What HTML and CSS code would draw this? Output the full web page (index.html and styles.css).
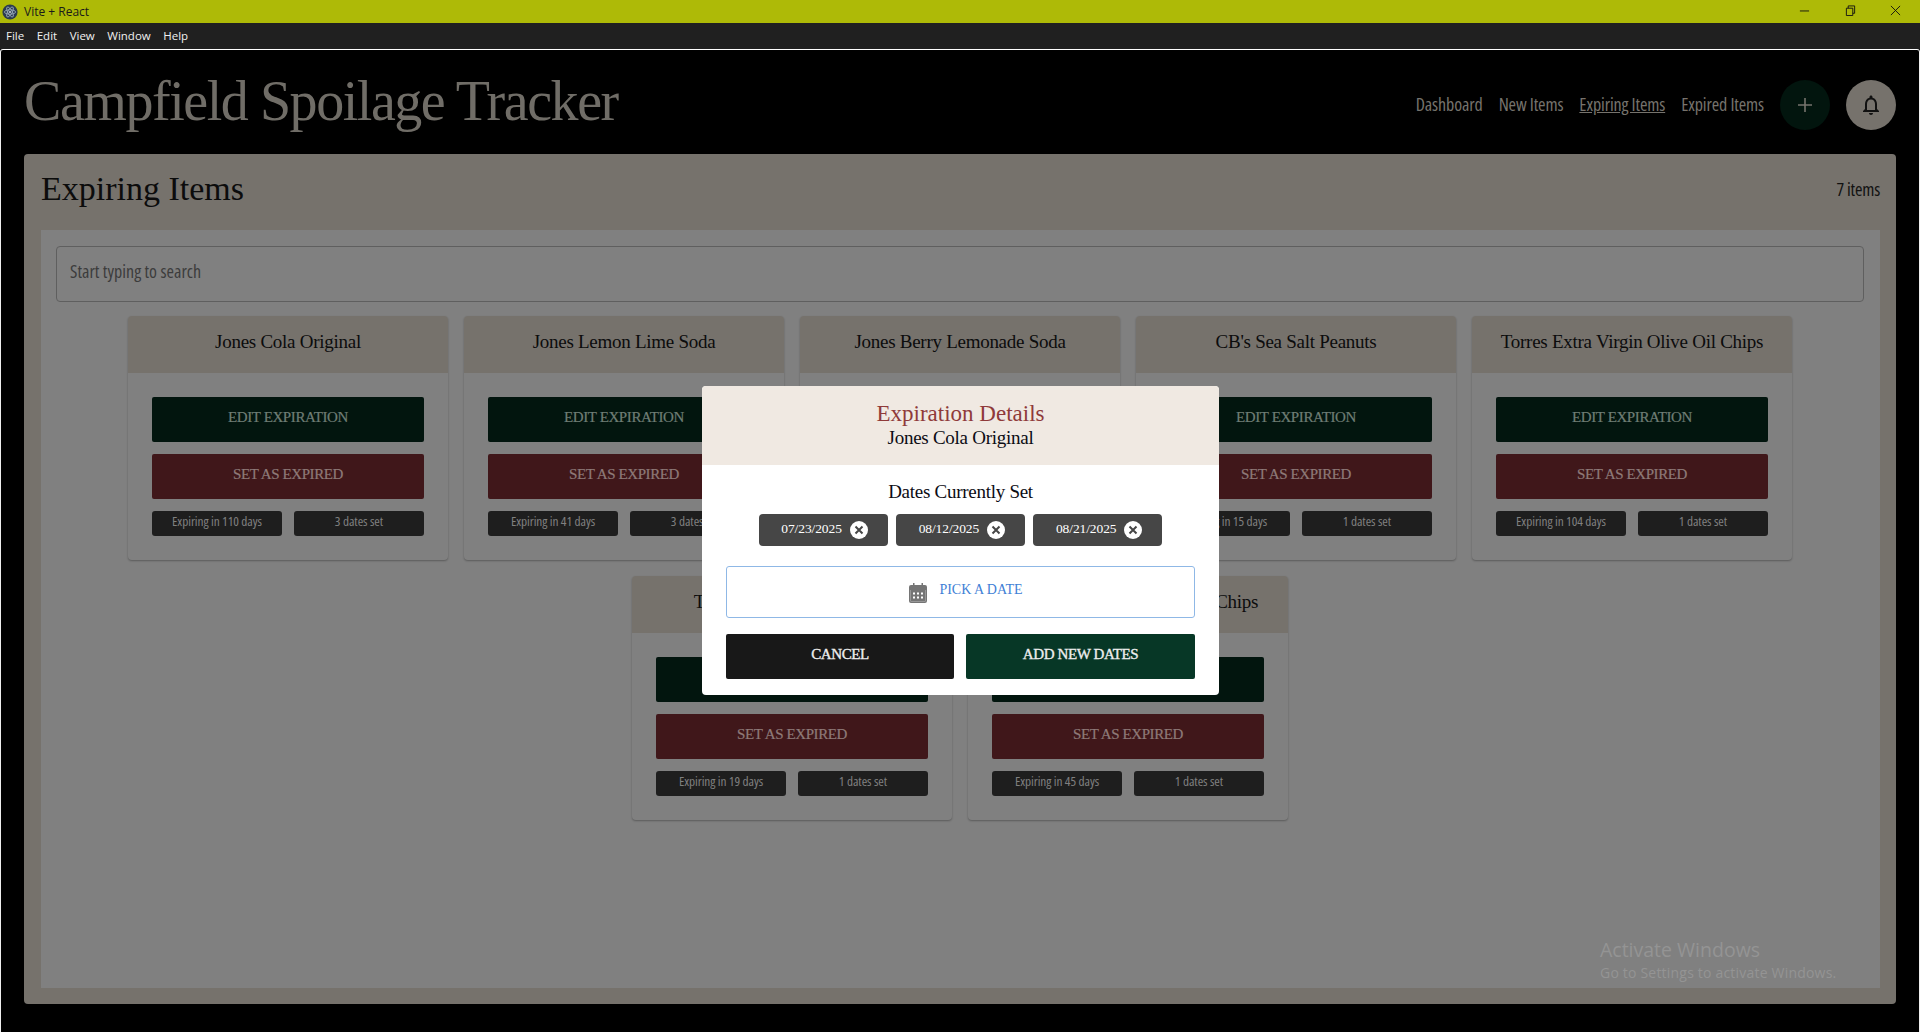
FILE: index.html
```html
<!DOCTYPE html>
<html lang="en">
<head>
<meta charset="utf-8">
<title>Vite + React</title>
<link rel="stylesheet" href="styles.css">
</head>
<body>
<div class="window">
  <div class="titlebar">
    <div class="titlebar-left">
      <svg class="app-icon" viewBox="0 0 16 16"><circle cx="8" cy="8" r="7.6" fill="#2b3a4f"/><g fill="none" stroke="#9fb0c0" stroke-width=".8"><ellipse cx="8" cy="8" rx="5.6" ry="2.2"/><ellipse cx="8" cy="8" rx="5.6" ry="2.2" transform="rotate(60 8 8)"/><ellipse cx="8" cy="8" rx="5.6" ry="2.2" transform="rotate(120 8 8)"/></g><circle cx="8" cy="8" r="1" fill="#cfd8e0"/></svg>
      <span>Vite + React</span>
    </div>
    <div class="window-controls">
      <svg class="win-icon" viewBox="0 0 12 12"><path d="M1 6.500h10" stroke="#111" stroke-width="1"/></svg>
      <svg class="win-icon" viewBox="0 0 12 12"><path d="M1.500 3.500h7v8h-7zM3.500 3.500v-2.500h7v8h-2" fill="none" stroke="#111" stroke-width="1"/></svg>
      <svg class="win-icon" viewBox="0 0 12 12"><path d="M1 1l10 10M11 1L1 11" stroke="#111" stroke-width="1"/></svg>
    </div>
  </div>
  <div class="menubar">
    <span>File</span><span>Edit</span><span>View</span><span>Window</span><span>Help</span>
  </div>
  <div class="app">
    <header class="app-header">
      <h1 class="app-title">Campfield Spoilage Tracker</h1>
      <nav class="nav">
        <a>Dashboard</a><a>New Items</a><a class="active">Expiring Items</a><a>Expired Items</a>
        <button class="round round-add"><svg viewBox="0 0 24 24"><path d="M12 5v14M5 12h14" stroke="currentColor" stroke-width="1.6" fill="none"/></svg></button>
        <button class="round round-bell"><svg viewBox="0 0 24 24"><path d="M12 22c1.100 0 2-.9 2-2h-4c0 1.100.9 2 2 2zm6-6v-5c0-3.070-1.630-5.640-4.500-6.320V4c0-.83-.67-1.500-1.500-1.500s-1.500.67-1.500 1.500v.68C7.640 5.360 6 7.920 6 11v5l-2 2v1h16v-1l-2-2zm-2 1H8v-6c0-2.480 1.510-4.500 4-4.500s4 2.020 4 4.500v6z" fill="currentColor"/></svg></button>
      </nav>
    </header>
    <main class="panel">
      <div class="panel-head">
        <h2 class="panel-title">Expiring Items</h2>
        <span class="panel-count">7 items</span>
      </div>
      <div class="panel-body">
        <div class="search">Start typing to search</div>
        <div class="cards">
          <article class="card"><h3 class="card-name">Jones Cola Original</h3><div class="card-body"><button class="btn btn-green">EDIT EXPIRATION</button><button class="btn btn-red">SET AS EXPIRED</button><div class="chips"><span class="chip">Expiring in 110 days</span><span class="chip">3 dates set</span></div></div></article>
          <article class="card"><h3 class="card-name">Jones Lemon Lime Soda</h3><div class="card-body"><button class="btn btn-green">EDIT EXPIRATION</button><button class="btn btn-red">SET AS EXPIRED</button><div class="chips"><span class="chip">Expiring in 41 days</span><span class="chip">3 dates set</span></div></div></article>
          <article class="card"><h3 class="card-name">Jones Berry Lemonade Soda</h3><div class="card-body"><button class="btn btn-green">EDIT EXPIRATION</button><button class="btn btn-red">SET AS EXPIRED</button><div class="chips"><span class="chip">Expiring in 60 days</span><span class="chip">1 dates set</span></div></div></article>
          <article class="card"><h3 class="card-name">CB's Sea Salt Peanuts</h3><div class="card-body"><button class="btn btn-green">EDIT EXPIRATION</button><button class="btn btn-red">SET AS EXPIRED</button><div class="chips"><span class="chip">Expiring in 15 days</span><span class="chip">1 dates set</span></div></div></article>
          <article class="card"><h3 class="card-name">Torres Extra Virgin Olive Oil Chips</h3><div class="card-body"><button class="btn btn-green">EDIT EXPIRATION</button><button class="btn btn-red">SET AS EXPIRED</button><div class="chips"><span class="chip">Expiring in 104 days</span><span class="chip">1 dates set</span></div></div></article>
          <article class="card"><h3 class="card-name">Torres Black Truffle Chips</h3><div class="card-body"><button class="btn btn-green">EDIT EXPIRATION</button><button class="btn btn-red">SET AS EXPIRED</button><div class="chips"><span class="chip">Expiring in 19 days</span><span class="chip">1 dates set</span></div></div></article>
          <article class="card"><h3 class="card-name">Torres Black Truffle Roasted Chips</h3><div class="card-body"><button class="btn btn-green">EDIT EXPIRATION</button><button class="btn btn-red">SET AS EXPIRED</button><div class="chips"><span class="chip">Expiring in 45 days</span><span class="chip">1 dates set</span></div></div></article>
        </div>
      </div>
    </main>
  </div>
  <div class="overlay">
    <div class="modal">
      <div class="modal-head">
        <div class="modal-title">Expiration Details</div>
        <div class="modal-sub">Jones Cola Original</div>
      </div>
      <div class="modal-body">
        <div class="modal-label">Dates Currently Set</div>
        <div class="date-row">
          <span class="date-chip">07/23/2025<svg class="x" viewBox="0 0 18 18"><circle cx="9" cy="9" r="9" fill="#fff"/><path d="M5.500 5.500l7 7M12.500 5.500l-7 7" stroke="#464646" stroke-width="2"/></svg></span>
          <span class="date-chip">08/12/2025<svg class="x" viewBox="0 0 18 18"><circle cx="9" cy="9" r="9" fill="#fff"/><path d="M5.500 5.500l7 7M12.500 5.500l-7 7" stroke="#464646" stroke-width="2"/></svg></span>
          <span class="date-chip">08/21/2025<svg class="x" viewBox="0 0 18 18"><circle cx="9" cy="9" r="9" fill="#fff"/><path d="M5.500 5.500l7 7M12.500 5.500l-7 7" stroke="#464646" stroke-width="2"/></svg></span>
        </div>
        <button class="pick"><svg class="cal" viewBox="0 0 18 20"><path d="M4 0h1.500v2h7V0H14v2h2a2 2 0 0 1 2 2v14a2 2 0 0 1-2 2H2a2 2 0 0 1-2-2V4a2 2 0 0 1 2-2h2zM1.500 7v11c0 .3.200.5.500.5h14c.3 0 .5-.2.5-.5V7z" fill="#757575"/><path d="M1.500 7h15v11.500h-15z" fill="#757575"/><path d="M4 9.500h2v2H4zM8 9.500h2v2H8zM12 9.500h2v2h-2zM4 13.500h2v2H4zM8 13.500h2v2H8zM12 13.500h2v2h-2z" fill="#fff"/></svg><span>PICK A DATE</span></button>
        <div class="modal-actions">
          <button class="act act-dark">CANCEL</button>
          <button class="act act-green">ADD NEW DATES</button>
        </div>
      </div>
    </div>
  </div>
  <div class="activate">
    <div class="activate-a">Activate Windows</div>
    <div class="activate-b">Go to Settings to activate Windows.</div>
  </div>
</div>
</body>
</html>
```
FILE: styles.css
```css
* { box-sizing: border-box; }
html, body { margin: 0; height: 100%; overflow: hidden; }
body { font-family: "Liberation Serif", serif; background: #000; }
.window { position: relative; height: 1032px; display: flex; flex-direction: column; }
button { font-family: inherit; border: 0; cursor: pointer; }

.titlebar { height: 23px; background: #aeba07; display: flex; justify-content: space-between; align-items: center; padding-left: 2px; font: 12px "Open Sans", sans-serif; color: #1a1a1a; }
.titlebar-left { display: flex; align-items: center; gap: 6px; }
.app-icon { width: 16px; height: 16px; }
.window-controls { display: flex; gap: 34.500px; padding-right: 19px; align-items: center; padding-bottom: 3px; }
.win-icon { width: 11px; height: 11px; display: block; }

.menubar { height: 26px; background: #202020; display: flex; align-items: center; gap: 12.500px; padding: 0 0 2px 6px; font: 11.500px "Open Sans", sans-serif; color: #f0f0f0; }

.app { flex: 1; background: #000; border-top: 1px solid #fff; border-left: 1px solid #eee; border-right: 1px solid #eee; border-radius: 3px 3px 0 0; display: flex; flex-direction: column; padding: 0 23px 28px 23px; min-height: 0; }
.app-header { height: 104px; display: flex; justify-content: space-between; align-items: flex-start; }
.app-title { margin: 19px 0 0; font-size: 56px; font-weight: 400; line-height: 64px; letter-spacing: -1.450px; color: #706d67; }
.nav { display: flex; align-items: center; gap: 16px; margin-top: 30px; font-family: "Open Sans", sans-serif; font-stretch: 75%; font-size: 18px; letter-spacing: -.12px; color: #76736d; }
.nav a { padding-bottom: 2px; }
.nav a.active { text-decoration: underline; }
.round { width: 50px; height: 50px; border-radius: 50%; display: flex; align-items: center; justify-content: center; padding: 0; }
.round svg { width: 24px; height: 24px; }
.round-add { background: #02150e; color: #76736d; }
.round-bell { background: #76726c; color: #111; }

.panel { flex: 1; background: #76726c; border-radius: 4px; padding: 0 16px 16px 17px; display: flex; flex-direction: column; min-height: 0; }
.panel-head { height: 76px; display: flex; justify-content: space-between; align-items: center; padding-bottom: 7px; }
.panel-title { margin: 0; font-size: 34px; font-weight: 400; color: #0c0c0c; }
.panel-count { font-family: "Open Sans", sans-serif; font-stretch: 75%; font-size: 18px; letter-spacing: -.2px; color: #111; }
.panel-body { flex: 1; background: #808080; padding: 16px 16px 0 15px; }
.search { height: 56px; border: 1px solid #5f5f5f; border-radius: 4px; display: flex; align-items: center; padding: 0 0 6px 13px; font-family: "Open Sans", sans-serif; font-stretch: 75%; font-size: 18px; letter-spacing: .03px; color: #3c3c3c; }
.cards { display: flex; flex-wrap: wrap; justify-content: center; gap: 16px; margin-top: 14px; }
.card { width: 320px; background: #808080; border-radius: 4px; box-shadow: 0 1px 2px rgba(0,0,0,.3); }
.card-name { margin: 0; height: 57px; background: #76726c; border-radius: 4px 4px 0 0; display: flex; align-items: center; justify-content: center; padding-bottom: 5px; font-size: 19px; font-weight: 400; letter-spacing: -.27px; color: #0c0c0c; }
.card-body { padding: 24px; display: flex; flex-direction: column; gap: 12px; }
.btn { height: 45px; border-radius: 2px; font-size: 15px; letter-spacing: -.4px; padding: 0 0 4px; -webkit-text-stroke: .2px; }
.btn-green { background: #02150e; color: #6f7d75; }
.btn-red { background: #40171a; color: #8e7a78; }
.chips { display: flex; gap: 12px; }
.chip { flex: 1; height: 25px; background: #1e1e1e; border-radius: 3px; font-family: "Open Sans", sans-serif; font-stretch: 75%; font-weight: 500; font-size: 13.300px; line-height: 21px; letter-spacing: -.05px; color: #808080; text-align: center; }

.overlay { position: absolute; inset: 50px 0 0 0; }
.modal { position: absolute; left: 702px; top: 336px; width: 517px; height: 309px; background: #fff; border-radius: 4px; overflow: hidden; }
.modal-head { height: 79px; background: #f0e9e2; text-align: center; padding-top: 14px; }
.modal-title { font-size: 23px; line-height: 27px; color: #8f3a3a; }
.modal-sub { font-size: 19px; line-height: 22px; letter-spacing: -.27px; color: #0c0c14; }
.modal-body { padding: 15px 24px 0; }
.modal-label { text-align: center; font-size: 19px; line-height: 24px; letter-spacing: -.27px; color: #0c0c14; }
.date-row { display: flex; justify-content: center; gap: 8px; margin-top: 10px; }
.date-chip { width: 129.330px; height: 32px; background: #464646; border-radius: 4px; color: #fff; font-size: 13.500px; letter-spacing: -.1px; display: flex; align-items: center; justify-content: flex-end; gap: 8px; padding: 0 20px 2px 0; }
.x { width: 18px; height: 18px; margin-top: 2px; }
.pick { display: flex; width: 100%; height: 52px; margin-top: 20px; background: #fff; border: 1px solid #8fb8e6; border-radius: 3px; align-items: center; justify-content: center; gap: 12px; font-size: 14px; color: #3f7fd6; padding: 0 0 4px 11px; }
.cal { width: 18px; height: 20px; margin-top: 6px; }
.modal-actions { display: grid; grid-template-columns: 228px 1fr; gap: 12px; margin-top: 16px; }
.act { height: 45px; border-radius: 2px; color: #eee; font-size: 15px; letter-spacing: -.4px; padding: 0 0 4px; -webkit-text-stroke: .35px; }
.act-dark { background: #181818; }
.act-green { background: #073726; }

.activate { position: absolute; left: 1600px; top: 937px; color: #949494; font-family: "Open Sans", sans-serif; }
.activate-a { font-size: 19.500px; line-height: 26px; }
.activate-b { font-size: 14px; line-height: 20px; letter-spacing: .2px; }
```
